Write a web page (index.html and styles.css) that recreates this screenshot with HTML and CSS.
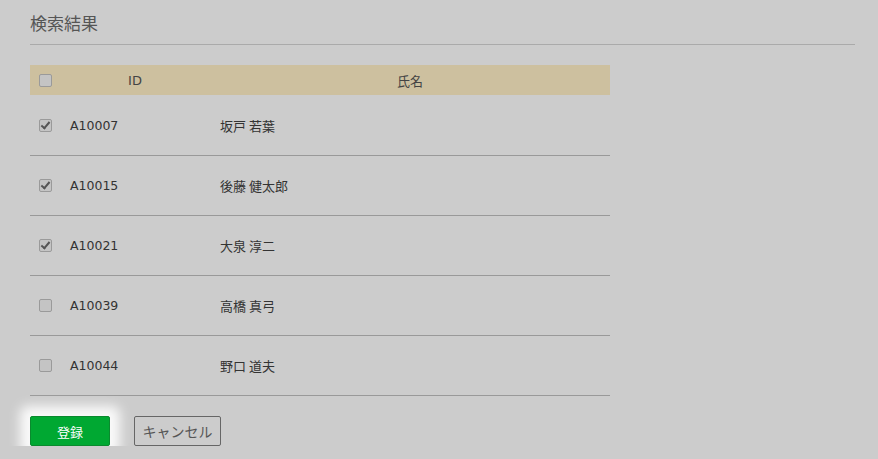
FILE: index.html
```html
<!DOCTYPE html>
<html lang="ja">
<head>
<meta charset="utf-8">
<title>検索結果</title>
<link rel="stylesheet" href="styles.css">
</head>
<body>
<div class="page">
  <h2 class="title">検索結果</h2>
  <table class="results">
    <thead>
      <tr>
        <th class="col-check"><span class="cb"></span></th>
        <th class="col-id">ID</th>
        <th class="col-name">氏名</th>
      </tr>
    </thead>
    <tbody>
      <tr class="first"><td class="col-check"><span class="cb checked"></span></td><td class="col-id">A10007</td><td class="col-name">坂戸 若葉</td></tr>
      <tr><td class="col-check"><span class="cb checked"></span></td><td class="col-id">A10015</td><td class="col-name">後藤 健太郎</td></tr>
      <tr><td class="col-check"><span class="cb checked"></span></td><td class="col-id">A10021</td><td class="col-name">大泉 淳二</td></tr>
      <tr><td class="col-check"><span class="cb"></span></td><td class="col-id">A10039</td><td class="col-name">高橋 真弓</td></tr>
      <tr><td class="col-check"><span class="cb"></span></td><td class="col-id">A10044</td><td class="col-name">野口 道夫</td></tr>
    </tbody>
  </table>
  <div class="actions">
    <button class="btn btn-primary" type="button">登録</button>
    <button class="btn btn-cancel" type="button">キャンセル</button>
  </div>
</div>
</body>
</html>
```

FILE: styles.css
```css
html, body {
  margin: 0;
  padding: 0;
  background: #cccccc;
}
body {
  font-family: "DejaVu Sans", "Noto Sans CJK JP", sans-serif;
  color: #333;
  font-size: 13px;
}
.page {
  padding: 11px 23px 0 30px;
}
.title {
  margin: 0;
  font-family: "Noto Sans CJK JP", sans-serif;
  font-weight: normal;
  font-size: 17px;
  color: #555;
  line-height: 24px;
  padding-bottom: 9px;
  border-bottom: 1px solid #aaaaaa;
  margin-bottom: 20px;
}
.results {
  width: 580px;
  border-collapse: collapse;
}
.results th {
  background: #cdc09f;
  height: 30px;
  padding: 0;
  font-weight: normal;
  text-align: center;
  font-size: 13px;
  color: #444;
  font-family: "DejaVu Sans", "Noto Sans CJK JP", sans-serif;
}
.results td {
  height: 59px;
  padding: 0;
  border-bottom: 1px solid #999999;
  vertical-align: middle;
}
.results tr.first td {
  height: 60px;
}
.col-check {
  width: 30px;
  text-align: center;
}
.results td.col-check, .results th.col-check {
  text-align: left;
  padding-left: 9px;
  width: 21px;
}
.col-id {
  width: 140px;
}
.results td.col-id {
  padding-left: 10px;
  font-size: 12.5px;
}
.results td.col-name {
  padding-left: 10px;
  font-family: "Noto Sans CJK JP", sans-serif;
  font-size: 13px;
}
.cb {
  display: block;
  width: 11px;
  height: 11px;
  border: 1px solid #9a9a9a;
  border-radius: 2px;
  background: #c4c4c4;
  position: relative;
}
.cb.checked::after {
  content: "";
  position: absolute;
  left: 3px;
  top: 0px;
  width: 3px;
  height: 7px;
  border-right: 2px solid #555;
  border-bottom: 2px solid #555;
  transform: rotate(40deg);
}
.actions {
  display: flex;
  gap: 24px;
  padding-top: 20px;
}
.btn {
  height: 30px;
  font-family: "Noto Sans CJK JP", sans-serif;
  font-size: 13px;
  border-radius: 2px;
  padding: 0;
  cursor: pointer;
}
.btn-primary {
  width: 80px;
  background: #00a832;
  border: 1px solid #0a8a2e;
  color: #fff;
  box-shadow: 0 0 12px 10px rgba(255, 255, 255, 0.9);
}
.btn-cancel {
  width: 87px;
  background: transparent;
  border: 1px solid #666;
  color: #555;
  font-size: 14px;
}
```
